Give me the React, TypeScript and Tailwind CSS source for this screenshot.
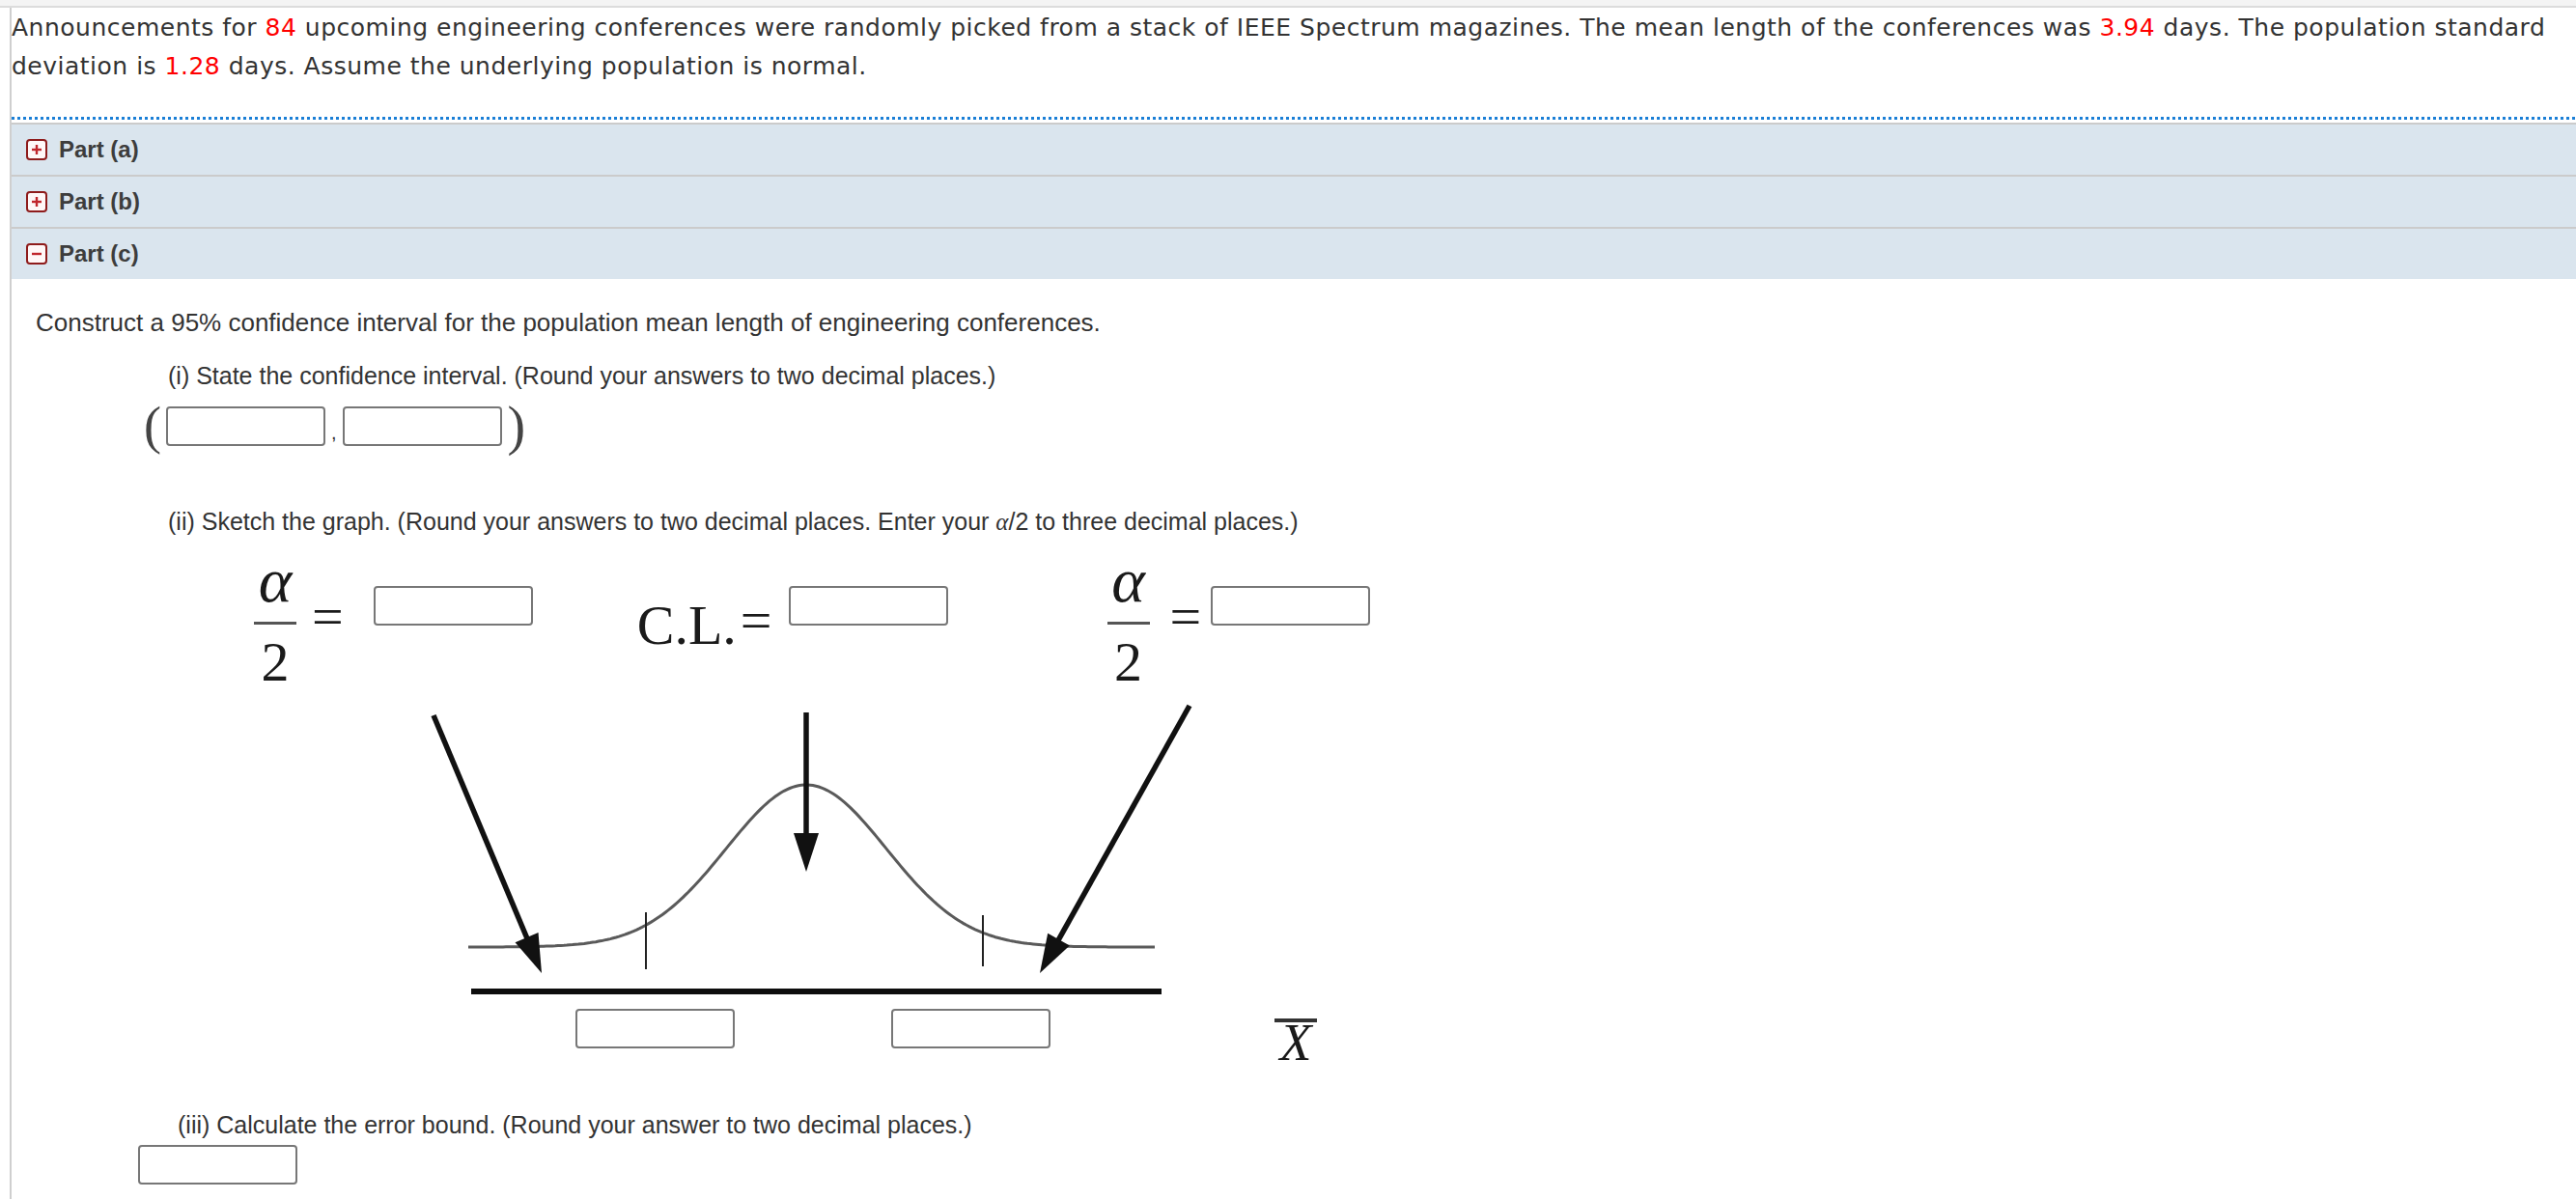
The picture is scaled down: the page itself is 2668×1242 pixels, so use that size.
import React from "react";

function ToggleIcon({ open }: { open: boolean }) {
  return (
    <svg width="22" height="22" viewBox="0 0 22 22" className="shrink-0">
      <rect x="1" y="1" width="20" height="20" rx="3" fill="#fff7f7" stroke="#8e1b1b" strokeWidth="2" />
      <line x1="6" y1="11" x2="16" y2="11" stroke="#c0262c" strokeWidth="2.4" />
      {!open && <line x1="11" y1="6" x2="11" y2="16" stroke="#c0262c" strokeWidth="2.4" />}
    </svg>
  );
}

function PartRow({ label, open }: { label: string; open?: boolean }) {
  return (
    <div className="flex h-[54px] items-center gap-[12px] border-t-2 border-[#cbcbcb] bg-[#dae5ee] pl-[15px]">
      <ToggleIcon open={!!open} />
      <span className="font-['Liberation_Sans',Arial,sans-serif] text-[24px] font-bold text-[#3d3d3d]">{label}</span>
    </div>
  );
}

function Blank({ className = "" }: { className?: string }) {
  return <div className={"h-[41px] w-[165px] rounded-[4px] border-2 border-[#777] bg-white " + className} />;
}

function HalfAlpha() {
  return (
    <div className="flex w-[46px] flex-col items-center font-['Liberation_Serif','Times_New_Roman',serif] leading-none text-[#1a1a1a]">
      <span className="mt-[-5px] text-[66px] italic">α</span>
      <div className="mt-[10px] h-[3px] w-[44px] bg-[#555]" />
      <span className="mt-[10px] text-[58px]">2</span>
    </div>
  );
}

function Arrow({ x1, y1, x2, y2 }: { x1: number; y1: number; x2: number; y2: number }) {
  const dx = x2 - x1;
  const dy = y2 - y1;
  const len = Math.hypot(dx, dy);
  const ux = dx / len;
  const uy = dy / len;
  const hl = 40;
  const hw = 13;
  const bx = x2 - ux * hl;
  const by = y2 - uy * hl;
  const pts = `${x2},${y2} ${bx - uy * hw},${by + ux * hw} ${bx + uy * hw},${by - ux * hw}`;
  return (
    <g>
      <line x1={x1} y1={y1} x2={bx + ux * 4} y2={by + uy * 4} stroke="#111" strokeWidth="5.5" />
      <polygon points={pts} fill="#111" />
    </g>
  );
}

function Graph() {
  const pts: string[] = [];
  for (let x = 245; x <= 956; x += 3) {
    const y = 268 - 168 * Math.exp(-((x - 595) ** 2) / (2 * 83 * 83));
    pts.push(`${x},${y.toFixed(1)}`);
  }
  return (
    <div className="relative h-[400px] w-[1200px]">
      <svg width="1200" height="400" className="absolute left-0 top-0">
        <polyline points={pts.join(" ")} fill="none" stroke="#5a5a5a" strokeWidth="3" />
        <line x1="429" y1="232" x2="429" y2="291" stroke="#222" strokeWidth="2" />
        <line x1="778" y1="235" x2="778" y2="288" stroke="#222" strokeWidth="2" />
        <line x1="248" y1="314" x2="963" y2="314" stroke="#0d0d0d" strokeWidth="6" />
        <Arrow x1={209} y1={28} x2={321} y2={295} />
        <Arrow x1={595} y1={25} x2={595} y2={190} />
        <Arrow x1={992} y1={18} x2={837} y2={295} />
      </svg>
      <Blank className="absolute left-[356px] top-[332px]" />
      <Blank className="absolute left-[683px] top-[332px]" />
      <div className="absolute left-[1080px] top-[342px] flex flex-col items-center font-['Liberation_Serif','Times_New_Roman',serif] text-[54px] italic leading-none text-[#1a1a1a]">
        <div className="h-[4px] w-[44px] bg-[#333]" />
        <span className="mt-[-6px]">X</span>
      </div>
    </div>
  );
}

export default function App() {
  const red = "text-[#ff0000]";
  const serif = "font-['Liberation_Serif','Times_New_Roman',serif] leading-none text-[#1a1a1a]";
  return (
    <div className="min-h-screen bg-white text-[#333]">
      <div className="h-[8px] border-b-2 border-[#dcdcdc] bg-[#f4f4f4]" />
      <div className="ml-[10px] min-h-[1234px] border-l-2 border-[#cfcfcf]">
        <p className="pt-px font-['DejaVu_Sans',Verdana,sans-serif] text-[25px] leading-[40px] tracking-[0.5px] text-[#333]">
          Announcements for <span className={red}>84</span> upcoming engineering conferences were randomly picked from a
          stack of IEEE Spectrum magazines. The mean length of the conferences was <span className={red}>3.94</span> days.
          The population standard deviation is <span className={red}>1.28</span> days. Assume the underlying population is
          normal.
        </p>

        <div className="mt-[32px] h-[3px] bg-[repeating-linear-gradient(to_right,#1b7fd6_0_3px,transparent_3px_6px)]" />
        <div className="mt-[3px]">
          <PartRow label="Part (a)" />
          <PartRow label="Part (b)" />
          <PartRow label="Part (c)" open />
        </div>

        <div className="font-['Liberation_Sans',Arial,sans-serif] text-[25px] leading-[28px] text-[#333]">
          <p className="mt-[31px] pl-[25px] text-[26px]">
            Construct a 95% confidence interval for the population mean length of engineering conferences.
          </p>

          <p className="mt-[27px] pl-[162px]">(i) State the confidence interval. (Round your answers to two decimal places.)</p>
          <div className="mt-[10px] flex items-center pl-[137px]">
            <span className="font-['Liberation_Serif','Times_New_Roman',serif] text-[54px] leading-none text-[#444]">(</span>
            <Blank className="ml-[5px]" />
            <span className="ml-[6px] mt-[14px] text-[20px]">,</span>
            <Blank className="ml-[6px]" />
            <span className="ml-[6px] font-['Liberation_Serif','Times_New_Roman',serif] text-[56px] leading-none text-[#444]">)</span>
          </div>

          <p className="mt-[57px] pl-[162px]">
            (ii) Sketch the graph. (Round your answers to two decimal places. Enter your{" "}
            <i className="font-['Liberation_Serif','Times_New_Roman',serif]">α</i>/2 to three decimal places.)
          </p>

          <div className="mt-[18px] pl-[228px]">
            <div className="flex h-[140px] items-start">
              <div className="ml-[22px]">
                <HalfAlpha />
              </div>
              <span className={"ml-[15px] mt-[37px] text-[58px] " + serif}>=</span>
              <Blank className="ml-[31px] mt-[34px]" />
              <span className={"ml-[108px] mt-[46px] text-[58px] " + serif}>C.L.</span>
              <span className={"ml-[4px] mt-[41px] text-[58px] " + serif}>=</span>
              <Blank className="ml-[17px] mt-[34px]" />
              <div className="ml-[164px]">
                <HalfAlpha />
              </div>
              <span className={"ml-[20px] mt-[37px] text-[58px] " + serif}>=</span>
              <Blank className="ml-[10px] mt-[34px]" />
            </div>
            <Graph />
          </div>

          <p className="mt-[38px] pl-[172px]">(iii) Calculate the error bound. (Round your answer to two decimal places.)</p>
          <Blank className="ml-[131px] mt-[7px]" />
        </div>
      </div>
    </div>
  );
}
